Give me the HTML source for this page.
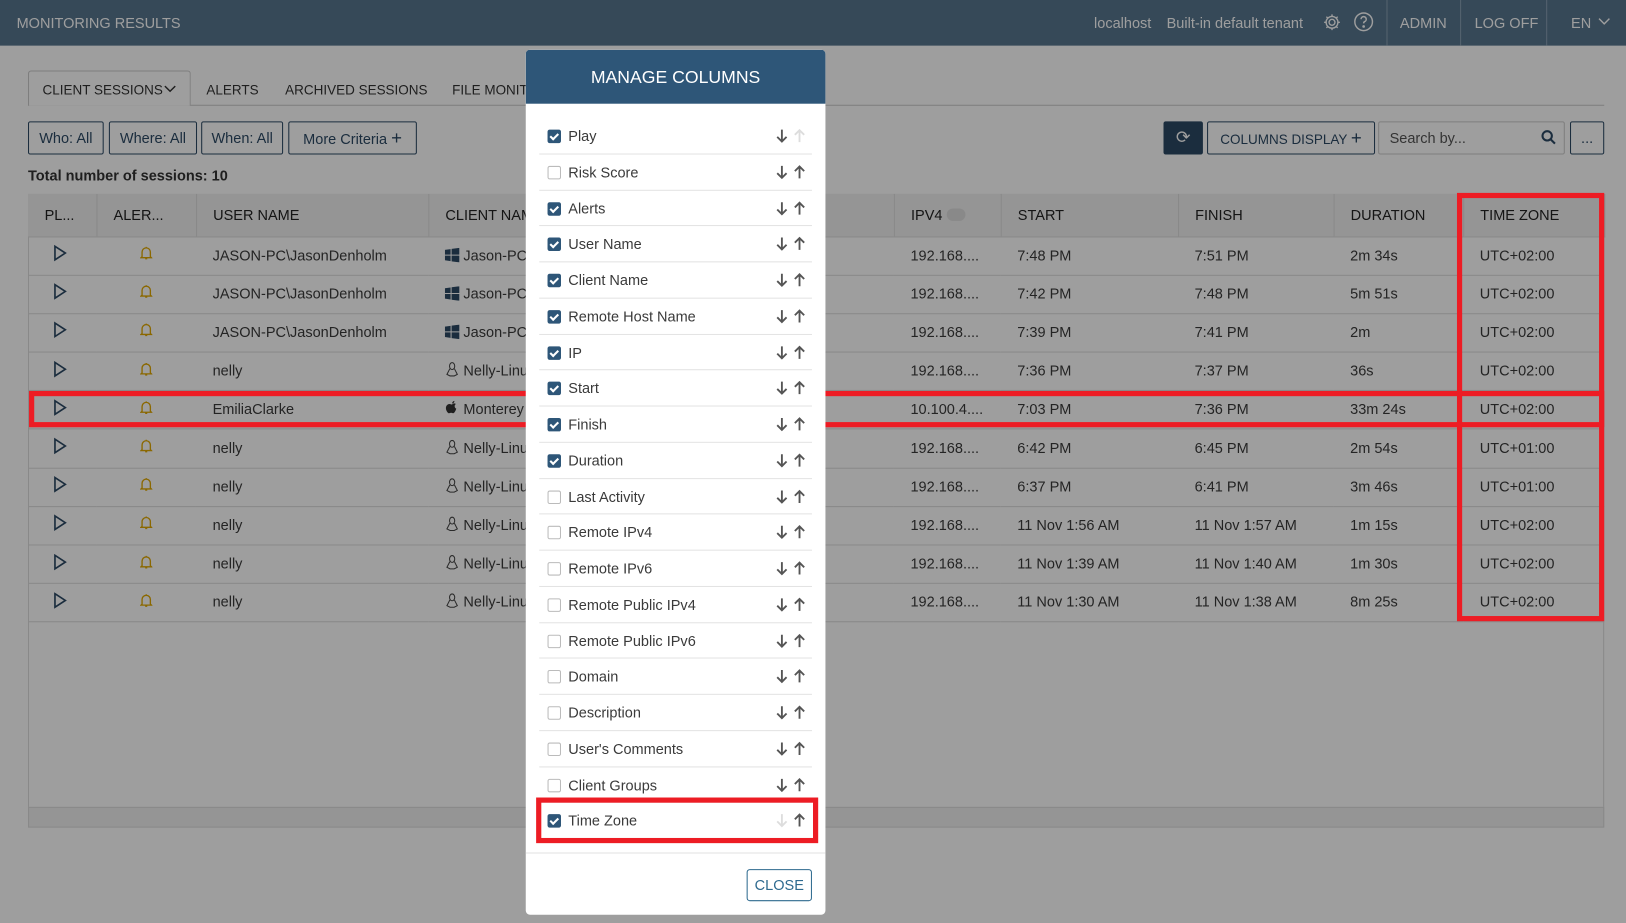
<!DOCTYPE html>
<html><head><meta charset="utf-8"><style>
*{box-sizing:border-box;margin:0;padding:0}
html,body{width:1626px;height:923px;overflow:hidden;background:#9e9e9e}
#s{position:absolute;left:0;top:0;width:1568px;height:890px;transform:scale(1.03699,1.03708);transform-origin:0 0;font-family:"Liberation Sans",sans-serif;font-size:14px;color:#333}
.a{position:absolute}
#page{position:absolute;left:0;top:0;width:1568px;height:890px;background:#fff}
#hdr{position:absolute;left:0;top:0;width:1568px;height:44px;background:#57768f;color:#fff;font-size:14px}
.btn{position:absolute;border:1px solid #2d4a65;border-radius:2px;height:32px;line-height:30px;color:#2d4a65;text-align:center;font-size:14px;background:#fff}
table{border-collapse:collapse;position:absolute;left:27px;top:187px;width:1520px;table-layout:fixed}
th{height:41px;background:#f0f0f0;text-align:left;font-weight:normal;padding-left:16px;border-right:1px solid #ddd;border-bottom:1px solid #ddd;font-size:14px;color:#222}
td{height:37.2px;padding-left:16px;padding-bottom:2px;border-bottom:1px solid #ddd;white-space:nowrap;overflow:hidden;color:#3a3a3a}
#ov{position:absolute;left:0;top:0;width:1568px;height:890px;background:rgba(0,0,0,0.38)}
.red{position:absolute;border:5px solid #ed1c24}
#m{position:absolute;left:507px;top:48px;width:289px;height:834px;background:#fff;border-radius:4px;overflow:hidden}
#mh{height:52px;background:#2e5678;color:#fff;font-size:17px;text-align:center;line-height:54px}
.it{position:absolute;left:13px;width:263px;height:34.75px;border-bottom:1px solid #e3e3e3}
.cb{position:absolute;left:8px;top:11px;width:13px;height:13px;border:1px solid #bbb;border-radius:2px;background:#fff}
.cb.on{background:#2e5678;border-color:#2e5678}
.cb.on:after{content:"";position:absolute;left:3px;top:1px;width:3px;height:6px;border:solid #fff;border-width:0 2px 2px 0;transform:rotate(45deg)}
.lb{position:absolute;left:28px;top:9px;font-size:14px;color:#3a3a3a}
.ar{position:absolute;top:10px}
.tab{position:absolute;top:79px;font-size:13px;color:#333}
</style></head><body><div id="s">
<div id="page">
<div id="hdr">
<div class="a" style="left:16px;top:14px">MONITORING RESULTS</div>
<div class="a" style="left:1055px;top:14px">localhost</div>
<div class="a" style="left:1125px;top:14px">Built-in default tenant</div>
<svg class="a" style="left:1275px;top:12px" width="19" height="19" viewBox="0 0 20 20" fill="none" stroke="#fff" stroke-width="1.4"><circle cx="10" cy="10" r="3"/><path d="M10 2v2.5M10 15.5V18M2 10h2.5M15.5 10H18M4.3 4.3l1.8 1.8M13.9 13.9l1.8 1.8M4.3 15.7l1.8-1.8M13.9 6.1l1.8-1.8"/><circle cx="10" cy="10" r="6"/></svg>
<svg class="a" style="left:1305px;top:11px" width="20" height="20" viewBox="0 0 20 20" fill="none" stroke="#fff" stroke-width="1.4"><circle cx="10" cy="10" r="8.5"/><path d="M7.5 7.5a2.5 2.5 0 1 1 3.5 2.3c-.8.4-1 .9-1 1.7"/><circle cx="10" cy="14.5" r=".6" fill="#fff"/></svg>
<div class="a" style="left:1337px;top:0;width:1px;height:44px;background:#8aa0b3"></div>
<div class="a" style="left:1350px;top:14px">ADMIN</div>
<div class="a" style="left:1408px;top:0;width:1px;height:44px;background:#8aa0b3"></div>
<div class="a" style="left:1422px;top:14px">LOG OFF</div>
<div class="a" style="left:1491px;top:0;width:1px;height:44px;background:#8aa0b3"></div>
<div class="a" style="left:1515px;top:14px">EN</div>
<svg class="a" style="left:1541px;top:17px" width="12" height="8" viewBox="0 0 12 8" fill="none" stroke="#fff" stroke-width="1.4"><path d="M1 1l5 5 5-5"/></svg>
</div>
<div class="a" style="left:27px;top:101px;width:1520px;height:1px;background:#ccc"></div>
<div class="a" style="left:27px;top:68px;width:157px;height:34px;border:1px solid #ccc;border-bottom:none;background:#fff;border-radius:3px 3px 0 0"></div>
<div class="tab" style="left:41px">CLIENT SESSIONS</div>
<svg class="a" style="left:158px;top:82px" width="12" height="8" viewBox="0 0 12 8" fill="none" stroke="#333" stroke-width="1.4"><path d="M1 1l5 5 5-5"/></svg>
<div class="tab" style="left:199px">ALERTS</div>
<div class="tab" style="left:275px">ARCHIVED SESSIONS</div>
<div class="tab" style="left:436px">FILE MONITORING</div>
<div class="btn" style="left:27px;top:117px;width:73px">Who: All</div>
<div class="btn" style="left:105px;top:117px;width:85px">Where: All</div>
<div class="btn" style="left:194px;top:117px;width:79px">When: All</div>
<div class="btn" style="left:278px;top:117px;width:124px">More Criteria <b style="font-size:18px;font-weight:normal">+</b></div>
<div class="btn" style="left:1122px;top:117px;width:38px;background:#2d4a65;color:#fff;font-size:17px">⟳</div>
<div class="btn" style="left:1164px;top:117px;width:162px;font-size:13px">COLUMNS DISPLAY <b style="font-size:18px;font-weight:normal">+</b></div>
<div class="btn" style="left:1329px;top:117px;width:180px;border-color:#ccc;text-align:left;padding-left:10px;color:#555">Search by...</div>
<svg class="a" style="left:1486px;top:125px" width="15" height="15" viewBox="0 0 15 15" fill="none" stroke="#2d4a65" stroke-width="2"><circle cx="6" cy="6" r="4.5"/><path d="M9.5 9.5l4 4"/></svg>
<div class="btn" style="left:1514px;top:117px;width:33px">...</div>
<div class="a" style="left:27px;top:161px;font-weight:bold">Total number of sessions: 10</div>
<div class="a" style="left:27px;top:187px;width:1520px;height:611px;border:1px solid #ddd"></div>
<div class="a" style="left:27px;top:778px;width:1520px;height:20px;background:#f0f0f0;border:1px solid #ddd"></div>
<table>
<colgroup><col style="width:66px"><col style="width:96px"><col style="width:224px"><col style="width:449px"><col style="width:103px"><col style="width:171px"><col style="width:150px"><col style="width:125px"><col style="width:136px"></colgroup>
<tr><th>PL...</th><th>ALER...</th><th>USER NAME</th><th>CLIENT NAME</th><th>IPV4 <span style="display:inline-block;width:18px;height:12px;border-radius:6px;background:#ddd;vertical-align:-1px"></span></th><th>START</th><th>FINISH</th><th>DURATION</th><th>TIME ZONE</th></tr>
<tbody id="tb"></tbody>
</table>
</div>
<div id="ov"></div>
<div class="red" style="left:1405px;top:186px;width:142px;height:413px"></div>
<div class="red" style="left:28px;top:377px;width:1519px;height:35px"></div>
<div id="m"><div id="mh">MANAGE COLUMNS</div><div id="li"></div>
<div class="a" style="left:0;top:774px;width:289px;height:1px;background:#e3e3e3"></div>
<div class="a" style="left:213px;top:790px;width:63px;height:31px;border:1px solid #2e6a8f;border-radius:3px;color:#2e6a8f;text-align:center;line-height:29px">CLOSE</div>
</div>
<div class="red" style="left:517px;top:769px;width:272px;height:44px"></div>
</div>
<script>
var rows=[["JASON-PC\\JasonDenholm","w","Jason-PC","192.168....","7:48 PM","7:51 PM","2m 34s","UTC+02:00"],
["JASON-PC\\JasonDenholm","w","Jason-PC","192.168....","7:42 PM","7:48 PM","5m 51s","UTC+02:00"],
["JASON-PC\\JasonDenholm","w","Jason-PC","192.168....","7:39 PM","7:41 PM","2m","UTC+02:00"],
["nelly","l","Nelly-Linux","192.168....","7:36 PM","7:37 PM","36s","UTC+02:00"],
["EmiliaClarke","a","Monterey","10.100.4....","7:03 PM","7:36 PM","33m 24s","UTC+02:00"],
["nelly","l","Nelly-Linux","192.168....","6:42 PM","6:45 PM","2m 54s","UTC+01:00"],
["nelly","l","Nelly-Linux","192.168....","6:37 PM","6:41 PM","3m 46s","UTC+01:00"],
["nelly","l","Nelly-Linux","192.168....","11 Nov 1:56 AM","11 Nov 1:57 AM","1m 15s","UTC+02:00"],
["nelly","l","Nelly-Linux","192.168....","11 Nov 1:39 AM","11 Nov 1:40 AM","1m 30s","UTC+02:00"],
["nelly","l","Nelly-Linux","192.168....","11 Nov 1:30 AM","11 Nov 1:38 AM","8m 25s","UTC+02:00"]];
var ic={w:'<svg width="14" height="14" viewBox="0 0 14 14" fill="#2d4a65" style="vertical-align:-2px"><path d="M0 2l5.5-.8v5.3H0zM6.5 1l7.5-1v6.5H6.5zM0 7.5h5.5v5.3L0 12zM6.5 7.5H14V14l-7.5-1z"/></svg>',
l:'<svg width="14" height="15" viewBox="0 0 14 15" fill="none" stroke="#444" stroke-width="1" style="vertical-align:-2px"><ellipse cx="7" cy="4" rx="2.5" ry="3.3"/><path d="M4.8 6.5L2 12l3 1.5h4L12 12 9.2 6.5"/></svg>',
a:'<svg width="14" height="15" viewBox="0 0 14 15" fill="#333" style="vertical-align:-2px"><path d="M7 4c1-1.3 2.5-1.3 3.6-.5C9 4.5 9 7 11 8c-.5 2-2 4.5-3 4.5S6.8 12 6 12s-1.3.5-2 .5C3 12.5 1 10 1 7.5S3 3.5 4.5 3.6C5.6 3.7 6 4.2 7 4zM7 3C7 1.8 8 .6 9.2.5 9.3 1.8 8.3 3 7 3z"/></svg>'};
var h='';rows.forEach(function(r){h+='<tr><td style="padding-left:24px"><svg width="14" height="16" viewBox="0 0 14 16" fill="none" stroke="#2d4a65" stroke-width="1.6"><path d="M2 1.5l10 6.5-10 6.5z"/></svg></td><td style="padding-left:42px"><svg width="12" height="14" viewBox="0 0 12 14" fill="none" stroke="#e0a800" stroke-width="1.3"><path d="M2 10.5V6a4 4 0 0 1 8 0v4.5l1 1H1zM5 12.5h2M6 1v1"/></svg></td><td>'+r[0]+'</td><td>'+ic[r[1]]+' '+r[2]+'</td><td>'+r[3]+'</td><td>'+r[4]+'</td><td>'+r[5]+'</td><td>'+r[6]+'</td><td>'+r[7]+'</td></tr>';});
document.getElementById('tb').innerHTML=h;
function arr(up,c){return '<svg width="12" height="14" viewBox="0 0 12 14" fill="none" stroke="'+c+'" stroke-width="1.8">'+(up?'<path d="M6 13V1.5M1.5 6L6 1.5 10.5 6"/>':'<path d="M6 1v11.5M1.5 8L6 12.5 10.5 8"/>')+'</svg>';}
var it=[["Play",1],["Risk Score",0],["Alerts",1],["User Name",1],["Client Name",1],["Remote Host Name",1],["IP",1],["Start",1],["Finish",1],["Duration",1],["Last Activity",0],["Remote IPv4",0],["Remote IPv6",0],["Remote Public IPv4",0],["Remote Public IPv6",0],["Domain",0],["Description",0],["User's Comments",0],["Client Groups",0],["Time Zone",1]];
var g='';it.forEach(function(x,i){var t=66+i*34.75;var d=i==19?'#ddd':'#555',u=i==0?'#ddd':'#555';
g+='<div class="it" style="top:'+t+'px;'+(i==19?'border-bottom:none':'')+'"><div class="cb'+(x[1]?' on':'')+'"></div><div class="lb">'+x[0]+'</div><div class="ar" style="left:228px">'+arr(0,d)+'</div><div class="ar" style="left:245px">'+arr(1,u)+'</div></div>';});
document.getElementById('li').innerHTML=g;
</script>
</body></html>
